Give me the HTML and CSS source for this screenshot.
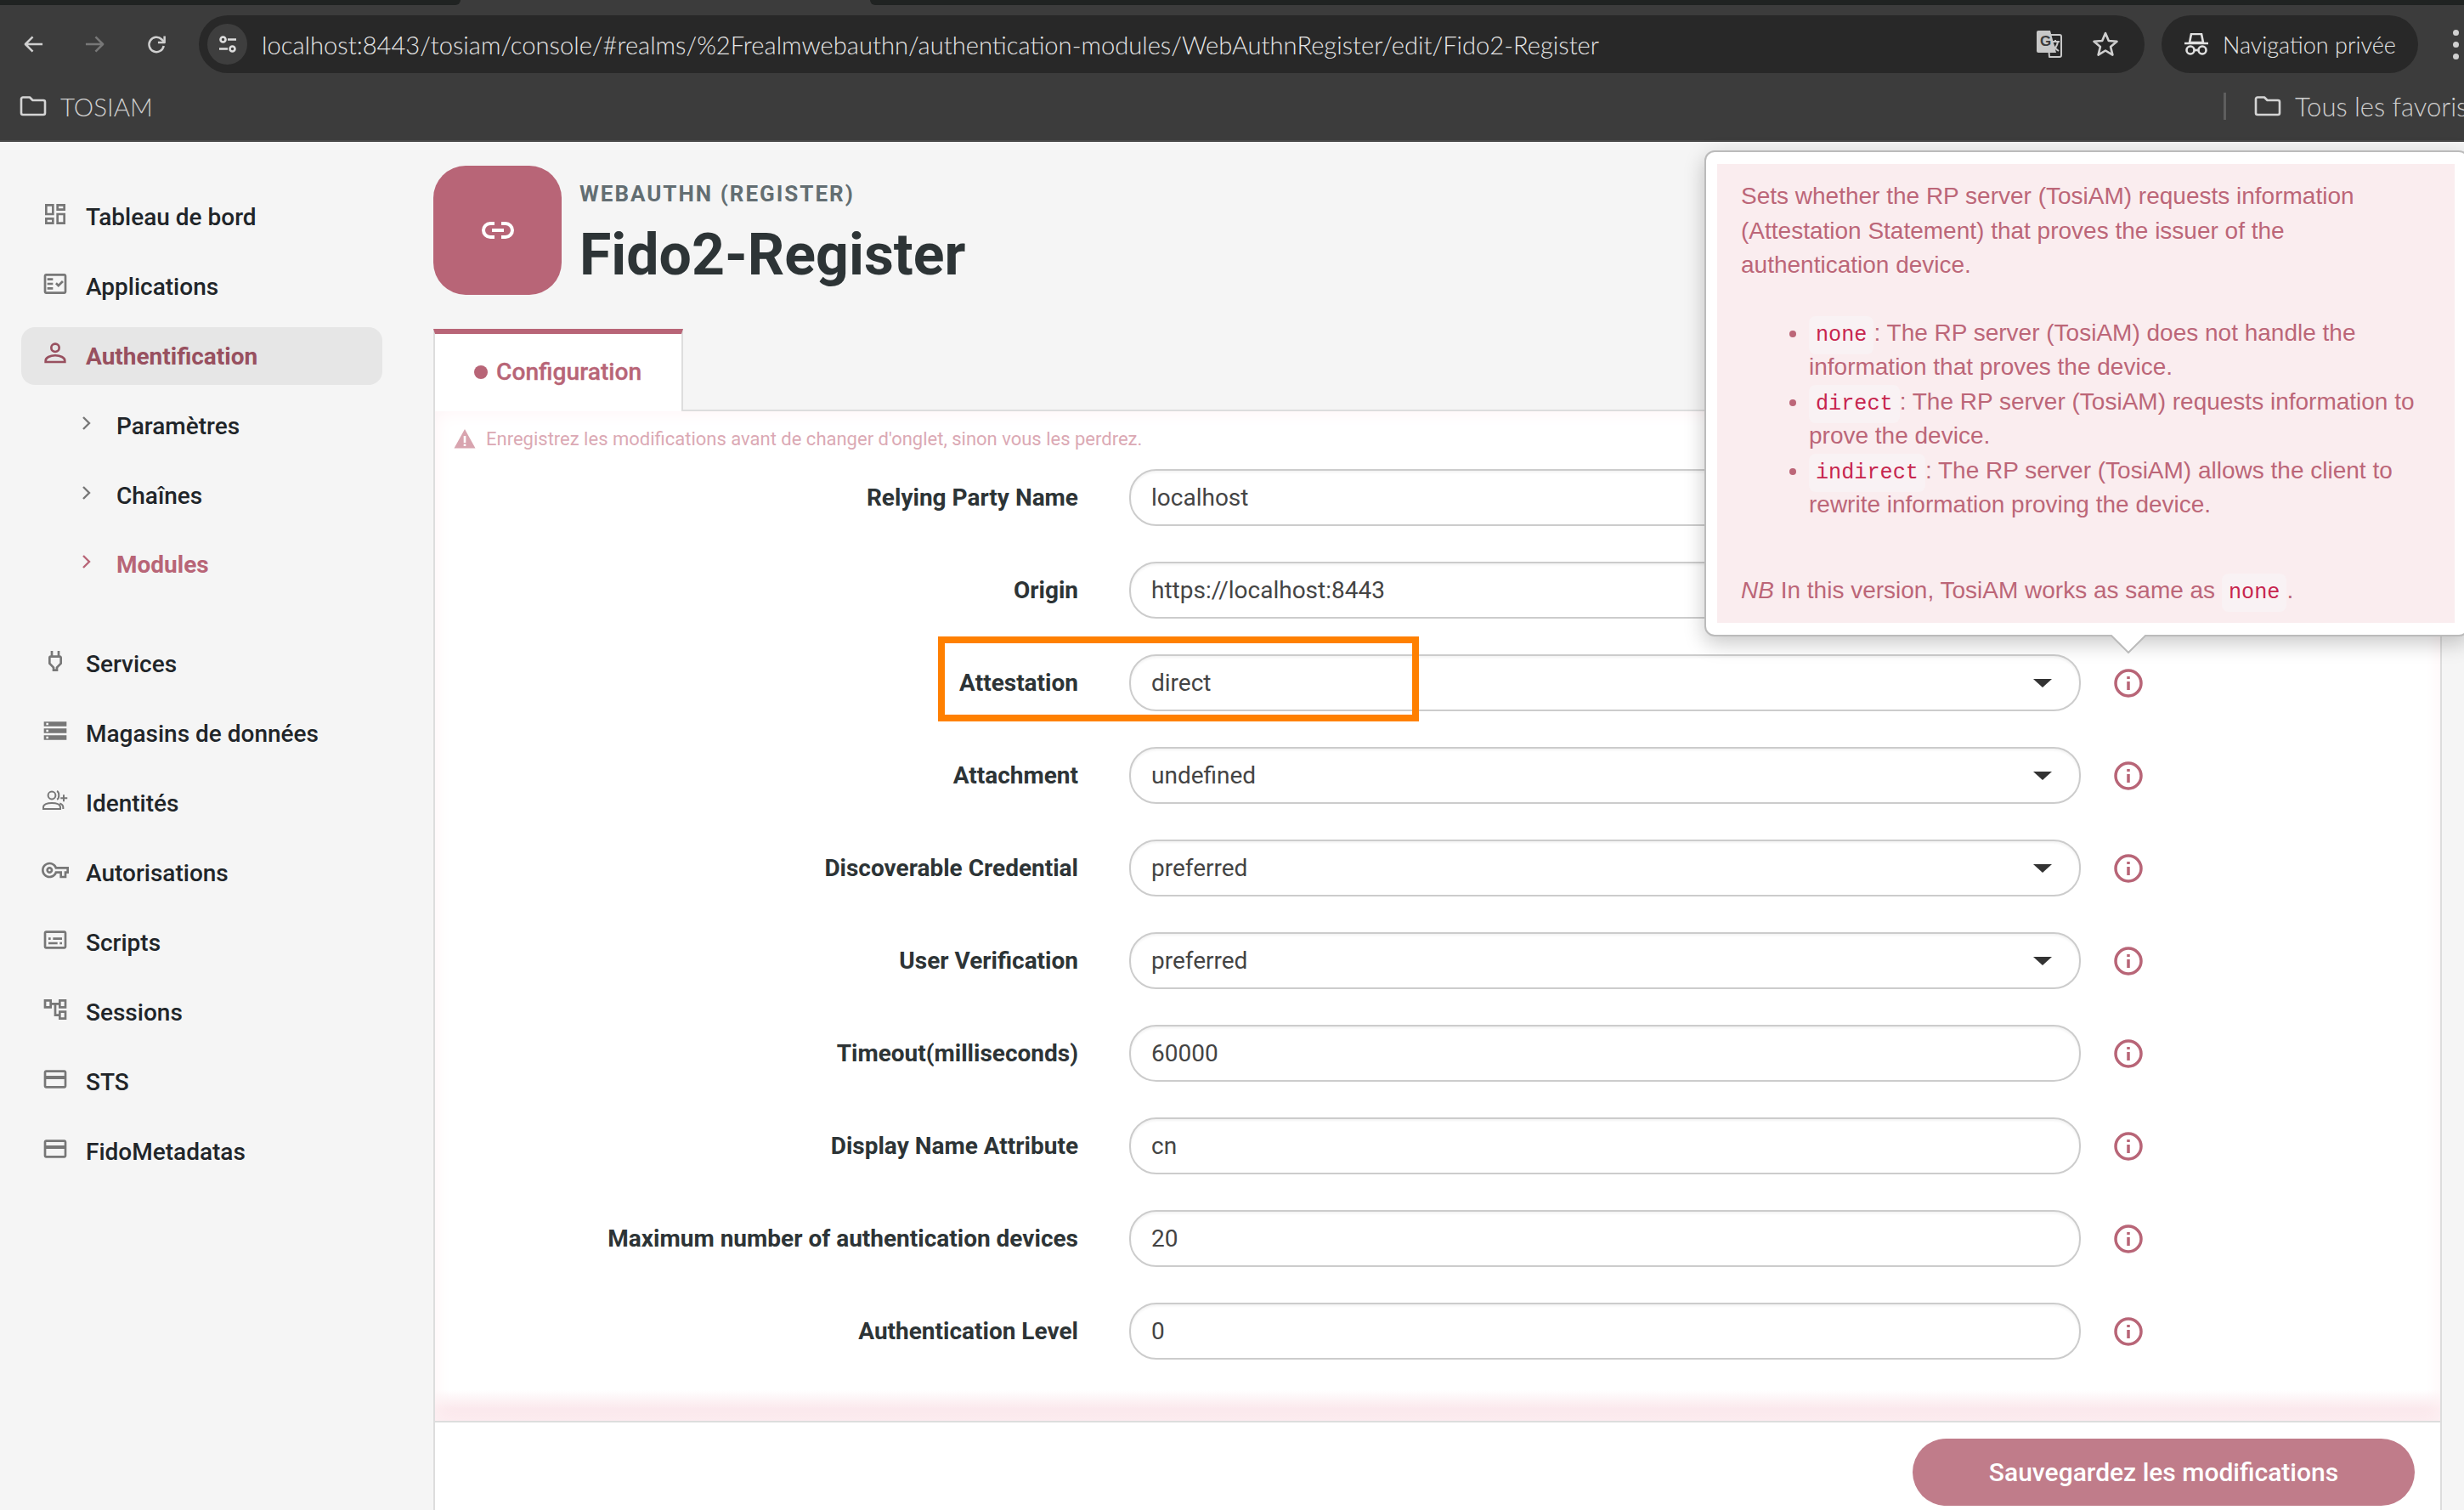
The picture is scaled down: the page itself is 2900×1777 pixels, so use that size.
FILE: index.html
```html
<!DOCTYPE html>
<html lang="fr">
<head>
<meta charset="utf-8">
<title>Fido2-Register</title>
<link rel="stylesheet" href="styles.css">
</head>
<body>
<div class="screen">
  <header class="browser">
    <div class="tabstrip"><div class="strip-left"></div><div class="strip-tab"></div><div class="strip-right"></div></div>
    <div class="toolbar">
      <svg class="tb-icon" viewBox="0 0 26 24"><path d="M24 12H3M12 3l-9 9 9 9" class="st"/></svg>
      <svg class="tb-icon dim" viewBox="0 0 26 24"><path d="M2 12h21M14 3l9 9-9 9" class="st"/></svg>
      <svg class="tb-icon" viewBox="0 0 26 24"><path d="M21.5 14a9 9 0 1 1-2.6-8L22 9" class="st"/><path d="M22.5 2v8h-8" class="st"/></svg>
      <div class="urlbar">
        <div class="siteinfo"><svg viewBox="0 0 24 24" class="site-svg"><circle cx="6.5" cy="6.5" r="3" class="st"/><path d="M12 6.500h10M2 17.500h10" class="st"/><circle cx="17.500" cy="17.500" r="3" class="st"/></svg></div>
        <span class="url">localhost:8443/tosiam/console/#realms/%2Frealmwebauthn/authentication-modules/WebAuthnRegister/edit/Fido2-Register</span>
        <svg class="translate" viewBox="0 0 34 32"><path d="M13 5h14a2 2 0 0 1 2 2v22a2 2 0 0 1-2 2H15z" class="st thin"/><path d="M2 0h14l7 26H2a2 2 0 0 1-2-2V2a2 2 0 0 1 2-2z" fill="#c8c8c8"/><text x="4" y="18" class="trans-g">G</text><path d="M17 13h10M22 11v2M25 13c-1 6-4 9-7 11M19 16c1 4 4 6 7 8" class="st thin"/></svg>
        <svg class="star" viewBox="0 0 32 32"><path d="M16 3l3.800 9 9.700.8-7.400 6.300 2.300 9.500L16 23.500l-8.400 5.100 2.300-9.500L2.500 12.800l9.700-.8z" class="st"/></svg>
      </div>
      <div class="incognito">
        <svg class="spy" viewBox="0 0 30 26"><path d="M9 1h12l2 10H7zM1 12h28" class="st"/><circle cx="8" cy="20" r="4.500" class="st"/><circle cx="22" cy="20" r="4.500" class="st"/><path d="M12.500 20h5" class="st"/></svg>
        <span>Navigation privée</span>
      </div>
      <div class="menu-dots"><i></i><i></i><i></i></div>
    </div>
    <div class="bookmarks">
      <div class="bm">
        <svg class="folder" viewBox="0 0 32 24"><path d="M2 3.500a2 2 0 0 1 2-2h8l3.500 3.500H28a2 2 0 0 1 2 2v13a2 2 0 0 1-2 2H4a2 2 0 0 1-2-2z" class="st"/></svg>
        <span>TOSIAM</span>
      </div>
      <div class="bm bm-right">
        <i class="bm-sep"></i>
        <svg class="folder" viewBox="0 0 32 24"><path d="M2 3.500a2 2 0 0 1 2-2h8l3.500 3.500H28a2 2 0 0 1 2 2v13a2 2 0 0 1-2 2H4a2 2 0 0 1-2-2z" class="st"/></svg>
        <span>Tous les favoris</span>
      </div>
    </div>
  </header>

  <div class="app">
    <nav class="sidebar">
      <a class="nav-item"><svg class="nav-icon" viewBox="0 0 24 24"><path d="M19 5v2h-4V5h4M9 5v6H5V5h4m10 8v6h-4v-6h4M9 17v2H5v-2h4M21 3h-8v6h8V3zM11 3H3v10h8V3zm10 8h-8v10h8V11zm-10 4H3v6h8v-6z"/></svg><span>Tableau de bord</span></a>
      <a class="nav-item"><svg class="nav-icon" viewBox="0 0 24 24"><path d="M20 3H4c-1.100 0-2 .9-2 2v14c0 1.100.9 2 2 2h16c1.100 0 2-.9 2-2V5c0-1.100-.9-2-2-2zm0 16H4V5h16v14z"/><path d="M19.410 10.420l-1.420-1.420-3.170 3.170-1.410-1.420L12 12.160 14.820 15zM5 7h5v2H5zM5 11h5v2H5zM5 15h5v2H5z"/></svg><span>Applications</span></a>
      <a class="nav-item active"><svg class="nav-icon" viewBox="0 0 24 24"><circle cx="12" cy="7" r="3.500" fill="none" stroke="currentColor" stroke-width="2"/><path d="M3.500 19.500v-1c0-3 4-4.800 8.500-4.800s8.500 1.800 8.500 4.800v1z" fill="none" stroke="currentColor" stroke-width="2"/></svg><span>Authentification</span></a>
      <a class="nav-item sub"><svg class="chev" viewBox="0 0 12 18"><path d="M2 2l7 7-7 7"/></svg><span>Paramètres</span></a>
      <a class="nav-item sub"><svg class="chev" viewBox="0 0 12 18"><path d="M2 2l7 7-7 7"/></svg><span>Chaînes</span></a>
      <a class="nav-item sub current"><svg class="chev" viewBox="0 0 12 18"><path d="M2 2l7 7-7 7"/></svg><span>Modules</span></a>
      <a class="nav-item group-start"><svg class="nav-icon" viewBox="0 0 24 24"><path d="M16 7V3h-2v4h-4V3H8v4h-.01C6.900 6.990 6 7.890 6 8.980v5.520L9.500 18v3h5v-3l3.500-3.510v-5.500c0-1.100-.9-2-2-2zm0 6.670l-3.500 3.510V19h-1v-1.820L8 13.650V9h8v4.670z"/></svg><span>Services</span></a>
      <a class="nav-item"><svg class="nav-icon" viewBox="0 0 24 24"><path d="M2 20h20v-4H2v4zm2-3h2v2H4v-2zM2 4v4h20V4H2zm4 3H4V5h2v2zm-4 7h20v-4H2v4zm2-3h2v2H4v-2z"/></svg><span>Magasins de données</span></a>
      <a class="nav-item"><svg class="nav-icon" viewBox="0 0 24 24"><g fill="none" stroke="currentColor" stroke-width="1.500"><circle cx="9" cy="7.500" r="3.300"/><path d="M1.500 19.500v-1.500c0-2.500 3.500-3.800 7.500-3.800s7.500 1.300 7.500 3.800v1.500zM13.500 3.800c2.300.7 2.300 6.500 0 7.300M16 14.500c1.700.6 3 1.800 3 3.500v1.500"/><path d="M19.500 7v6M16.700 10h6"/></g></svg><span>Identités</span></a>
      <a class="nav-item"><svg class="nav-icon" viewBox="0 0 24 24"><path d="M22 19h-6v-4h-2.680c-1.140 2.420-3.600 4-6.320 4-3.860 0-7-3.140-7-7s3.140-7 7-7c2.720 0 5.170 1.580 6.320 4H24v6h-2v4zm-4-2h2v-4h2v-2H11.940l-.23-.67C11.010 8.340 9.110 7 7 7c-2.760 0-5 2.240-5 5s2.240 5 5 5c2.110 0 4.010-1.340 4.710-3.330l.23-.67H18v4zM7 15c-1.650 0-3-1.350-3-3s1.350-3 3-3 3 1.350 3 3-1.350 3-3 3zm0-4c-.55 0-1 .45-1 1s.45 1 1 1 1-.45 1-1-.45-1-1-1z"/></svg><span>Autorisations</span></a>
      <a class="nav-item"><svg class="nav-icon" viewBox="0 0 24 24"><path d="M20 4H4c-1.100 0-2 .9-2 2v12c0 1.100.9 2 2 2h16c1.100 0 2-.9 2-2V6c0-1.100-.9-2-2-2zm0 14H4V6h16v12zM6 10h2v2H6zm0 4h8v2H6zm10 0h2v2h-2zm-6-4h8v2h-8z"/></svg><span>Scripts</span></a>
      <a class="nav-item"><svg class="nav-icon" viewBox="0 0 24 24"><path d="M22 11V3h-7v3H9V3H2v8h7V8h2v10h4v3h7v-8h-7v3h-2V8h2v3h7zM7 9H4V5h3v4zm10 6h3v4h-3v-4zm0-10h3v4h-3V5z"/></svg><span>Sessions</span></a>
      <a class="nav-item"><svg class="nav-icon" viewBox="0 0 24 24"><path d="M20 4H4c-1.110 0-1.990.89-1.990 2L2 18c0 1.110.89 2 2 2h16c1.110 0 2-.89 2-2V6c0-1.110-.89-2-2-2zm0 14H4v-6h16v6zm0-9H4V6h16v3z"/></svg><span>STS</span></a>
      <a class="nav-item"><svg class="nav-icon" viewBox="0 0 24 24"><path d="M20 4H4c-1.110 0-1.990.89-1.990 2L2 18c0 1.110.89 2 2 2h16c1.110 0 2-.89 2-2V6c0-1.110-.89-2-2-2zm0 14H4v-6h16v6zm0-9H4V6h16v3z"/></svg><span>FidoMetadatas</span></a>
    </nav>

    <main class="content">
      <section class="page-head">
        <div class="module-badge"><svg viewBox="0 0 40 22" class="link-svg"><path d="M16 3H11a8 8 0 0 0 0 16h5M24 3h5a8 8 0 0 1 0 16h-5M13 11h14"/></svg></div>
        <div class="titles">
          <div class="kicker">WEBAUTHN (REGISTER)</div>
          <h1 class="title">Fido2-Register</h1>
        </div>
      </section>

      <div class="tabs"><div class="tab"><i class="tab-dot"></i>Configuration</div></div>

      <section class="card">
        <div class="card-body">
          <div class="warning">
            <svg class="warn-icon" viewBox="0 0 26 24"><path d="M13 1L25.500 23.500H.5zM11.700 9v8h2.600V9zm0 9.500v2.500h2.600v-2.500z" fill-rule="evenodd"/></svg>
            <span>Enregistrez les modifications avant de changer d'onglet, sinon vous les perdrez.</span>
          </div>
          <div class="rows">
            <div class="row"><div class="label">Relying Party Name</div><div class="field">localhost</div><svg class="info" viewBox="0 0 34 34"><circle cx="17" cy="17" r="15"/><path d="M17 15v10M17 9v3"/></svg></div>
            <div class="row"><div class="label">Origin</div><div class="field">https://localhost:8443</div><svg class="info" viewBox="0 0 34 34"><circle cx="17" cy="17" r="15"/><path d="M17 15v10M17 9v3"/></svg></div>
            <div class="row"><div class="label">Attestation</div><div class="field select">direct</div><svg class="info" viewBox="0 0 34 34"><circle cx="17" cy="17" r="15"/><path d="M17 15v10M17 9v3"/></svg></div>
            <div class="row"><div class="label">Attachment</div><div class="field select">undefined</div><svg class="info" viewBox="0 0 34 34"><circle cx="17" cy="17" r="15"/><path d="M17 15v10M17 9v3"/></svg></div>
            <div class="row"><div class="label">Discoverable Credential</div><div class="field select">preferred</div><svg class="info" viewBox="0 0 34 34"><circle cx="17" cy="17" r="15"/><path d="M17 15v10M17 9v3"/></svg></div>
            <div class="row"><div class="label">User Verification</div><div class="field select">preferred</div><svg class="info" viewBox="0 0 34 34"><circle cx="17" cy="17" r="15"/><path d="M17 15v10M17 9v3"/></svg></div>
            <div class="row"><div class="label">Timeout(milliseconds)</div><div class="field">60000</div><svg class="info" viewBox="0 0 34 34"><circle cx="17" cy="17" r="15"/><path d="M17 15v10M17 9v3"/></svg></div>
            <div class="row"><div class="label">Display Name Attribute</div><div class="field">cn</div><svg class="info" viewBox="0 0 34 34"><circle cx="17" cy="17" r="15"/><path d="M17 15v10M17 9v3"/></svg></div>
            <div class="row"><div class="label">Maximum number of authentication devices</div><div class="field">20</div><svg class="info" viewBox="0 0 34 34"><circle cx="17" cy="17" r="15"/><path d="M17 15v10M17 9v3"/></svg></div>
            <div class="row"><div class="label">Authentication Level</div><div class="field">0</div><svg class="info" viewBox="0 0 34 34"><circle cx="17" cy="17" r="15"/><path d="M17 15v10M17 9v3"/></svg></div>
          </div>
        </div>
        <div class="card-foot"><button class="save">Sauvegardez les modifications</button></div>
      </section>
    </main>
  </div>

  <div class="highlight"></div>

  <aside class="popover">
    <div class="pop-alert">
      <p class="pop-intro">Sets whether the RP server (TosiAM) requests information (Attestation Statement) that proves the issuer of the authentication device.</p>
      <ul class="pop-list">
        <li><code>none</code>: The RP server (TosiAM) does not handle the information that proves the device.</li>
        <li><code>direct</code>: The RP server (TosiAM) requests information to prove the device.</li>
        <li><code>indirect</code>: The RP server (TosiAM) allows the client to rewrite information proving the device.</li>
      </ul>
      <p class="pop-note"><em>NB</em> In this version, TosiAM works as same as <code>none</code>.</p>
    </div>
    <svg class="pop-arrow" viewBox="0 0 42 22"><path d="M0 0h42L21 21z" fill="#fff"/><path d="M0 0l21 21L42 0" fill="none" stroke="#bbb" stroke-width="2"/></svg>
  </aside>
</div>
</body>
</html>
```

FILE: styles.css
```css
* { box-sizing: border-box; }
html, body { margin: 0; padding: 0; }
body { background: #f5f5f5; font-family: Roboto, "Liberation Sans", sans-serif; }
.screen { position: relative; width: 2900px; height: 1777px; overflow: hidden; background: #f5f5f5; }

/* browser chrome */
.browser { height: 167px; background: #3c3c3c; display: flex; flex-direction: column; color: #e3e3e3; border-bottom: 2px solid #4a4a4a; font-family: Lato, "Open Sans", sans-serif; }
.tabstrip { height: 6px; display: flex; flex: none; }
.strip-left { width: 542px; background: #202322; border-bottom-right-radius: 10px; flex: none; }
.strip-tab { width: 482px; flex: none; }
.strip-right { flex: 1; background: #202322; border-bottom-left-radius: 10px; }
.toolbar { height: 68px; margin-top: 12px; display: flex; align-items: center; padding-left: 27px; flex: none; }
.st { fill: none; stroke: currentColor; stroke-width: 2.6; stroke-linejoin: round; }
.thin { stroke-width: 2; }
.tb-icon { width: 25px; height: 24px; color: #d0d0d0; margin-right: 47px; flex: none; }
.tb-icon.dim { color: #777; margin-right: 48px; }
.urlbar { width: 2290px; margin-left: -10px; height: 68px; border-radius: 34px; background: #282828; display: flex; align-items: center; padding: 0 30px 0 10px; flex: none; }
.siteinfo { width: 47px; height: 48px; border-radius: 50%; background: #3e3e3e; display: flex; align-items: center; justify-content: center; color: #ddd; flex: none; }
.site-svg { width: 24px; height: 24px; }
.url { margin-left: 17px; font-size: 29.150px; font-weight: 300; color: #e6e6e6; white-space: nowrap; }
.translate { width: 34px; height: 32px; color: #c8c8c8; margin-left: auto; flex: none; }
.trans-g { font: 700 17px "Liberation Sans", sans-serif; fill: #3c3c3c; }
.star { width: 32px; height: 32px; color: #cfcfcf; margin-left: 31px; flex: none; }
.incognito { margin-left: 20px; height: 68px; width: 302px; border-radius: 34px; background: #282828; display: flex; align-items: center; padding-left: 26px; flex: none; font-size: 27px; font-weight: 300; color: #e6e6e6; }
.spy { width: 30px; height: 26px; margin-right: 16px; color: #e0e0e0; }
.menu-dots { margin-left: 41px; display: flex; flex-direction: column; gap: 7px; flex: none; }
.menu-dots i { display: block; width: 7px; height: 7px; border-radius: 50%; background: #d0d0d0; }
.bookmarks { display: flex; justify-content: space-between; padding-left: 23px; margin-top: 8px; height: 62px; align-items: center; font-size: 29.500px; font-weight: 300; color: #cfcfcf; white-space: nowrap; flex: none; }
.bm { display: flex; align-items: center; }
.bm-right { width: 283px; overflow: hidden; flex: none; font-size: 31px; }
.bm-sep { display: block; width: 3px; height: 32px; background: #5e5e5e; margin-right: 33px; flex: none; }
.folder { width: 32px; height: 24px; color: #d4d4d4; margin-right: 16px; flex: none; }

/* app */
.app { display: flex; height: 1610px; }
.sidebar { width: 510px; flex: none; padding: 54px 60px 0 25px; }
.nav-item { display: flex; align-items: center; height: 68px; margin-bottom: 13.900px; padding-left: 24px; font-size: 28px; font-weight: 500; color: #212529; border-radius: 16px; }
.nav-item span { margin-top: 1px; }
.nav-icon { width: 32px; height: 32px; fill: #777; color: #777; margin-right: 20px; margin-top: -6px; flex: none; }
.nav-item.active { background: #e6e6e6; color: #98505f; font-weight: 700; }
.nav-item.active .nav-icon { fill: none; color: #98505f; }
.nav-item.sub { padding-left: 71px; }
.chev { width: 12px; height: 18px; fill: none; stroke: #777; stroke-width: 2.400; margin-right: 29px; margin-top: -6px; flex: none; }
.nav-item.current { color: #b86577; font-weight: 700; }
.nav-item.current .chev { stroke: #b86577; }
.group-start { margin-top: 49px; }

/* content */
.content { flex: 1; min-width: 0; padding: 28px 26px 0 0; display: flex; flex-direction: column; }
.page-head { display: flex; height: 152px; margin-bottom: 40px; flex: none; }
.module-badge { width: 151px; height: 152px; border-radius: 38px; background: #b86577; display: flex; align-items: center; justify-content: center; flex: none; }
.link-svg { width: 40px; height: 22px; fill: none; stroke: #fff; stroke-width: 4; }
.titles { margin-left: 21px; }
.kicker { margin-top: 16px; font-size: 26px; font-weight: 700; letter-spacing: 2px; color: #636e72; line-height: 34px; }
.title { margin: 15px 0 0; font-size: 68px; font-weight: 700; color: #2d3436; line-height: 80px; }
.tabs { display: flex; height: 95px; flex: none; }
.tab { width: 294px; height: 97px; border-top: 6px solid #b86577; border-right: 2px solid #ddd; border-left: 2px solid #ddd; background: #fff; position: relative; z-index: 1; display: flex; align-items: center; padding: 0 0 2px 46px; font-size: 28.200px; font-weight: 500; color: #b86577; -webkit-text-stroke: .3px #b86577; }
.tab-dot { width: 16px; height: 16px; border-radius: 50%; background: #b86577; margin-right: 10px; flex: none; }
.card { flex: 1; background: #fff; border: 2px solid #ddd; border-bottom: 0; display: flex; flex-direction: column; min-height: 0; }
.card-body { height: 1190px; flex: none; border-bottom: 2px solid #ddd; padding-top: 2px; background: linear-gradient(to top, #fae5ea 0, #fbe8ec 14px, #fff 36px); box-shadow: inset 0 0 22px #fef3f5; }
.warning { display: flex; align-items: center; height: 66px; padding: 0 0 6px 22px; font-size: 22px; color: #dba9b4; flex: none; }
.warn-icon { width: 26px; height: 24px; fill: #d8a4af; margin-right: 12px; flex: none; }
.rows { display: flex; flex-direction: column; gap: 42px; }
.row { display: flex; align-items: center; height: 67px; }
.label { width: 757px; text-align: right; font-size: 28px; font-weight: 700; color: #2d3436; flex: none; }
.field { width: 1120px; margin-left: 60px; height: 67px; border: 2px solid #ccc; border-radius: 32px; background: #fff; display: flex; align-items: center; padding-left: 24px; font-size: 28px; color: #444; flex: none; position: relative; box-shadow: inset 0 2px 3px rgba(0,0,0,.05); }
.select::after { content: ""; position: absolute; right: 32px; top: 27px; border-left: 11px solid transparent; border-right: 11px solid transparent; border-top: 10px solid #333; }
.info { width: 34px; height: 34px; margin-left: 39px; fill: none; stroke: #b86577; stroke-width: 3.500; flex: none; }
.card-foot { flex: 1; display: flex; justify-content: flex-end; align-items: flex-start; padding: 19px 30px 0 0; background: #fff; }
.save { width: 591px; height: 79px; border: 0; border-radius: 40px; background: #c07c8a; color: #fff; font: 500 30px Roboto, sans-serif; }

/* overlays */
.highlight { position: absolute; left: 1104px; top: 749px; width: 566px; height: 100px; border: 8px solid #ff8000; }
.popover { position: absolute; left: 2006px; top: 177px; width: 900px; height: 572px; background: #fff; border: 2px solid #bbb; border-radius: 12px; box-shadow: 0 8px 24px rgba(0,0,0,.22); padding: 14px 0 0 13px; }
.pop-alert { width: 868px; height: 540px; background: #faedef; color: #bc6678; font-family: "Liberation Sans", sans-serif; font-size: 28px; line-height: 40.500px; padding: 18px 0 0 28px; }
.pop-alert p { margin: 0; }
.pop-intro { width: 800px; }
.pop-list { margin: 39px 0 0; padding: 0 0 0 80px; width: 840px; }
.pop-note { margin-top: 60px !important; }
code { font-family: "Liberation Mono", monospace; font-size: 25.200px; line-height: 1; color: #c7254e; background: #f9f2f4; padding: 8px 8px; border-radius: 8px; }
.pop-arrow { position: absolute; left: 476px; top: 568px; width: 42px; height: 22px; }
```
